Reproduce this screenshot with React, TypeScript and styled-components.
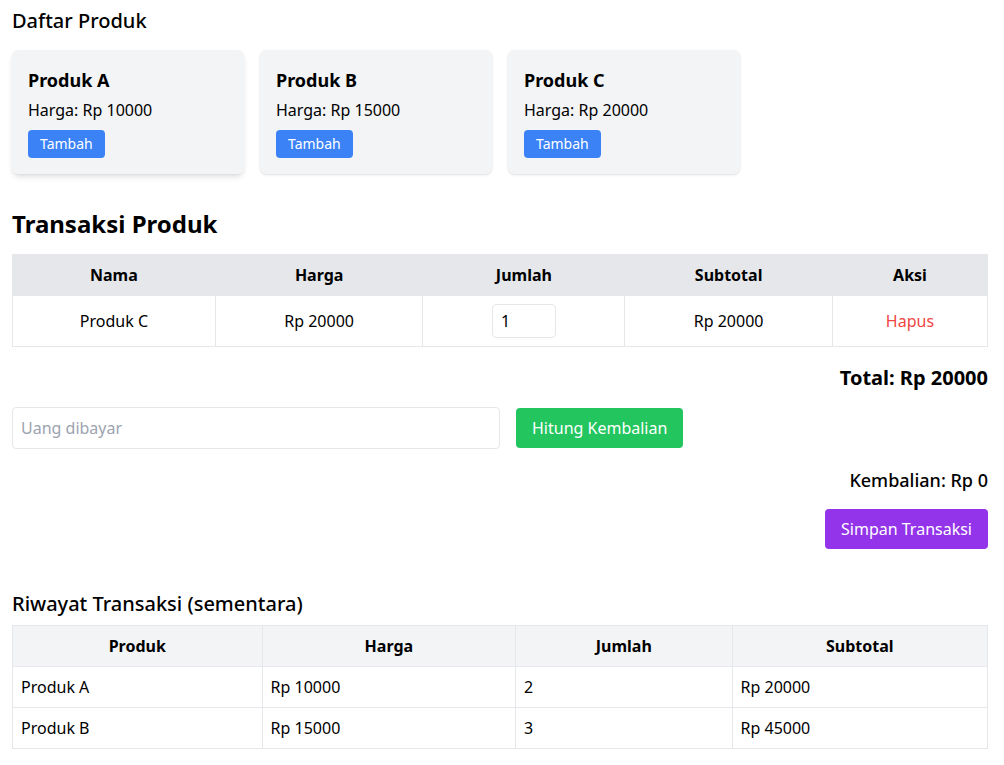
import React, { useState } from "react";
import styled, { createGlobalStyle } from "styled-components";

const GlobalStyle = createGlobalStyle`
  * {
    box-sizing: border-box;
  }
  body {
    margin: 0;
    background: #ffffff;
    color: #000000;
    font-family: "Noto Sans", "Open Sans", sans-serif;
    font-size: 16px;
    line-height: 24px;
  }
`;

const Page = styled.div`
  padding: 7px 16px 16px 12px;
`;

const SectionTitle = styled.h2<{ $top?: number }>`
  margin: ${(p) => p.$top || 0}px 0 0 0;
  font-size: 20px;
  line-height: 28px;
  font-weight: 500;
`;

const BigTitle = styled.h1`
  margin: 34px 0 14px 0;
  font-size: 24px;
  line-height: 32px;
  font-weight: 700;
`;

const CardRow = styled.div`
  display: flex;
  gap: 16px;
  margin-top: 15px;
`;

const Card = styled.div<{ $raised?: boolean }>`
  width: 232px;
  padding: 16px;
  background: #f3f4f6;
  border-radius: 6px;
  box-shadow: ${(p) =>
    p.$raised
      ? "0 4px 6px -1px rgba(0,0,0,0.1), 0 2px 4px -2px rgba(0,0,0,0.1)"
      : "0 1px 3px 0 rgba(0,0,0,0.1), 0 1px 2px -1px rgba(0,0,0,0.1)"};
`;

const CardTitle = styled.h3`
  margin: 0 0 4px 0;
  font-size: 18px;
  line-height: 28px;
  font-weight: 700;
`;

const CardPrice = styled.p`
  margin: 0;
`;

const Button = styled.button<{ $color: string; $small?: boolean }>`
  font-family: inherit;
  border: none;
  border-radius: 4px;
  color: #ffffff;
  background: ${(p) => p.$color};
  cursor: pointer;
  font-size: ${(p) => (p.$small ? "14px" : "16px")};
  line-height: ${(p) => (p.$small ? "20px" : "24px")};
  padding: ${(p) => (p.$small ? "4px 12px" : "8px 16px")};
`;

const AddButton = styled(Button)`
  margin-top: 8px;
`;

const Table = styled.table`
  width: 100%;
  border-collapse: collapse;
  border: 1px solid #e5e7eb;
`;

const HeadCell = styled.th<{ $bg: string; $w: string }>`
  width: ${(p) => p.$w};
  background: ${(p) => p.$bg};
  border: 1px solid #e5e7eb;
  padding: 8px;
  font-weight: 700;
  text-align: center;
`;

const Cell = styled.td<{ $align?: string }>`
  border: 1px solid #e5e7eb;
  padding: 8px;
  text-align: ${(p) => p.$align || "center"};
  vertical-align: middle;
`;

const QtyInput = styled.input`
  width: 64px;
  height: 34px;
  padding: 4px 8px;
  border: 1px solid #e5e7eb;
  border-radius: 4px;
  font-family: inherit;
  font-size: 16px;
  color: #000000;
`;

const DeleteLink = styled.span`
  color: #ef4444;
  cursor: pointer;
`;

const RightLine = styled.div<{ $size: number; $weight: number; $top: number }>`
  margin-top: ${(p) => p.$top}px;
  text-align: right;
  font-size: ${(p) => p.$size}px;
  line-height: 28px;
  font-weight: ${(p) => p.$weight};
`;

const PayRow = styled.div`
  display: flex;
  align-items: center;
  gap: 16px;
  margin-top: 15px;
`;

const PayInput = styled.input`
  width: 50%;
  padding: 8px;
  border: 1px solid #e5e7eb;
  border-radius: 4px;
  font-family: inherit;
  font-size: 16px;
  line-height: 24px;
  &::placeholder {
    color: #9ca3af;
  }
`;

const SaveRow = styled.div`
  display: flex;
  justify-content: flex-end;
  margin-top: 15px;
`;

const HistoryTable = styled(Table)`
  margin-top: 7px;
`;

const products = [
  { name: "Produk A", price: 10000 },
  { name: "Produk B", price: 15000 },
  { name: "Produk C", price: 20000 },
];

const history = [
  { name: "Produk A", price: 10000, qty: 2 },
  { name: "Produk B", price: 15000, qty: 3 },
];

export default function App() {
  const [qty, setQty] = useState("1");
  const [paid, setPaid] = useState("");

  return (
    <Page>
      <GlobalStyle />
      <SectionTitle>Daftar Produk</SectionTitle>
      <CardRow>
        {products.map((p, i) => (
          <Card key={p.name} $raised={i === 0}>
            <CardTitle>{p.name}</CardTitle>
            <CardPrice>Harga: Rp {p.price}</CardPrice>
            <AddButton $color="#3b82f6" $small>
              Tambah
            </AddButton>
          </Card>
        ))}
      </CardRow>

      <BigTitle>Transaksi Produk</BigTitle>
      <Table>
        <thead>
          <tr>
            <HeadCell $bg="#e5e7eb" $w="20.8%">Nama</HeadCell>
            <HeadCell $bg="#e5e7eb" $w="21.3%">Harga</HeadCell>
            <HeadCell $bg="#e5e7eb" $w="20.7%">Jumlah</HeadCell>
            <HeadCell $bg="#e5e7eb" $w="21.3%">Subtotal</HeadCell>
            <HeadCell $bg="#e5e7eb" $w="15.9%">Aksi</HeadCell>
          </tr>
        </thead>
        <tbody>
          <tr>
            <Cell>Produk C</Cell>
            <Cell>Rp 20000</Cell>
            <Cell>
              <QtyInput value={qty} onChange={(e) => setQty(e.target.value)} />
            </Cell>
            <Cell>Rp 20000</Cell>
            <Cell>
              <DeleteLink>Hapus</DeleteLink>
            </Cell>
          </tr>
        </tbody>
      </Table>

      <RightLine $size={20} $weight={700} $top={17}>
        Total: Rp 20000
      </RightLine>

      <PayRow>
        <PayInput
          placeholder="Uang dibayar"
          value={paid}
          onChange={(e) => setPaid(e.target.value)}
        />
        <Button $color="#22c55e">Hitung Kembalian</Button>
      </PayRow>

      <RightLine $size={18} $weight={500} $top={17}>
        Kembalian: Rp 0
      </RightLine>

      <SaveRow>
        <Button $color="#9333ea">Simpan Transaksi</Button>
      </SaveRow>

      <SectionTitle $top={41}>Riwayat Transaksi (sementara)</SectionTitle>
      <HistoryTable>
        <thead>
          <tr>
            <HeadCell $bg="#f3f4f6" $w="25.6%">Produk</HeadCell>
            <HeadCell $bg="#f3f4f6" $w="26%">Harga</HeadCell>
            <HeadCell $bg="#f3f4f6" $w="22.2%">Jumlah</HeadCell>
            <HeadCell $bg="#f3f4f6" $w="26.2%">Subtotal</HeadCell>
          </tr>
        </thead>
        <tbody>
          {history.map((h) => (
            <tr key={h.name}>
              <Cell $align="left">{h.name}</Cell>
              <Cell $align="left">Rp {h.price}</Cell>
              <Cell $align="left">{h.qty}</Cell>
              <Cell $align="left">Rp {h.price * h.qty}</Cell>
            </tr>
          ))}
        </tbody>
      </HistoryTable>
    </Page>
  );
}
